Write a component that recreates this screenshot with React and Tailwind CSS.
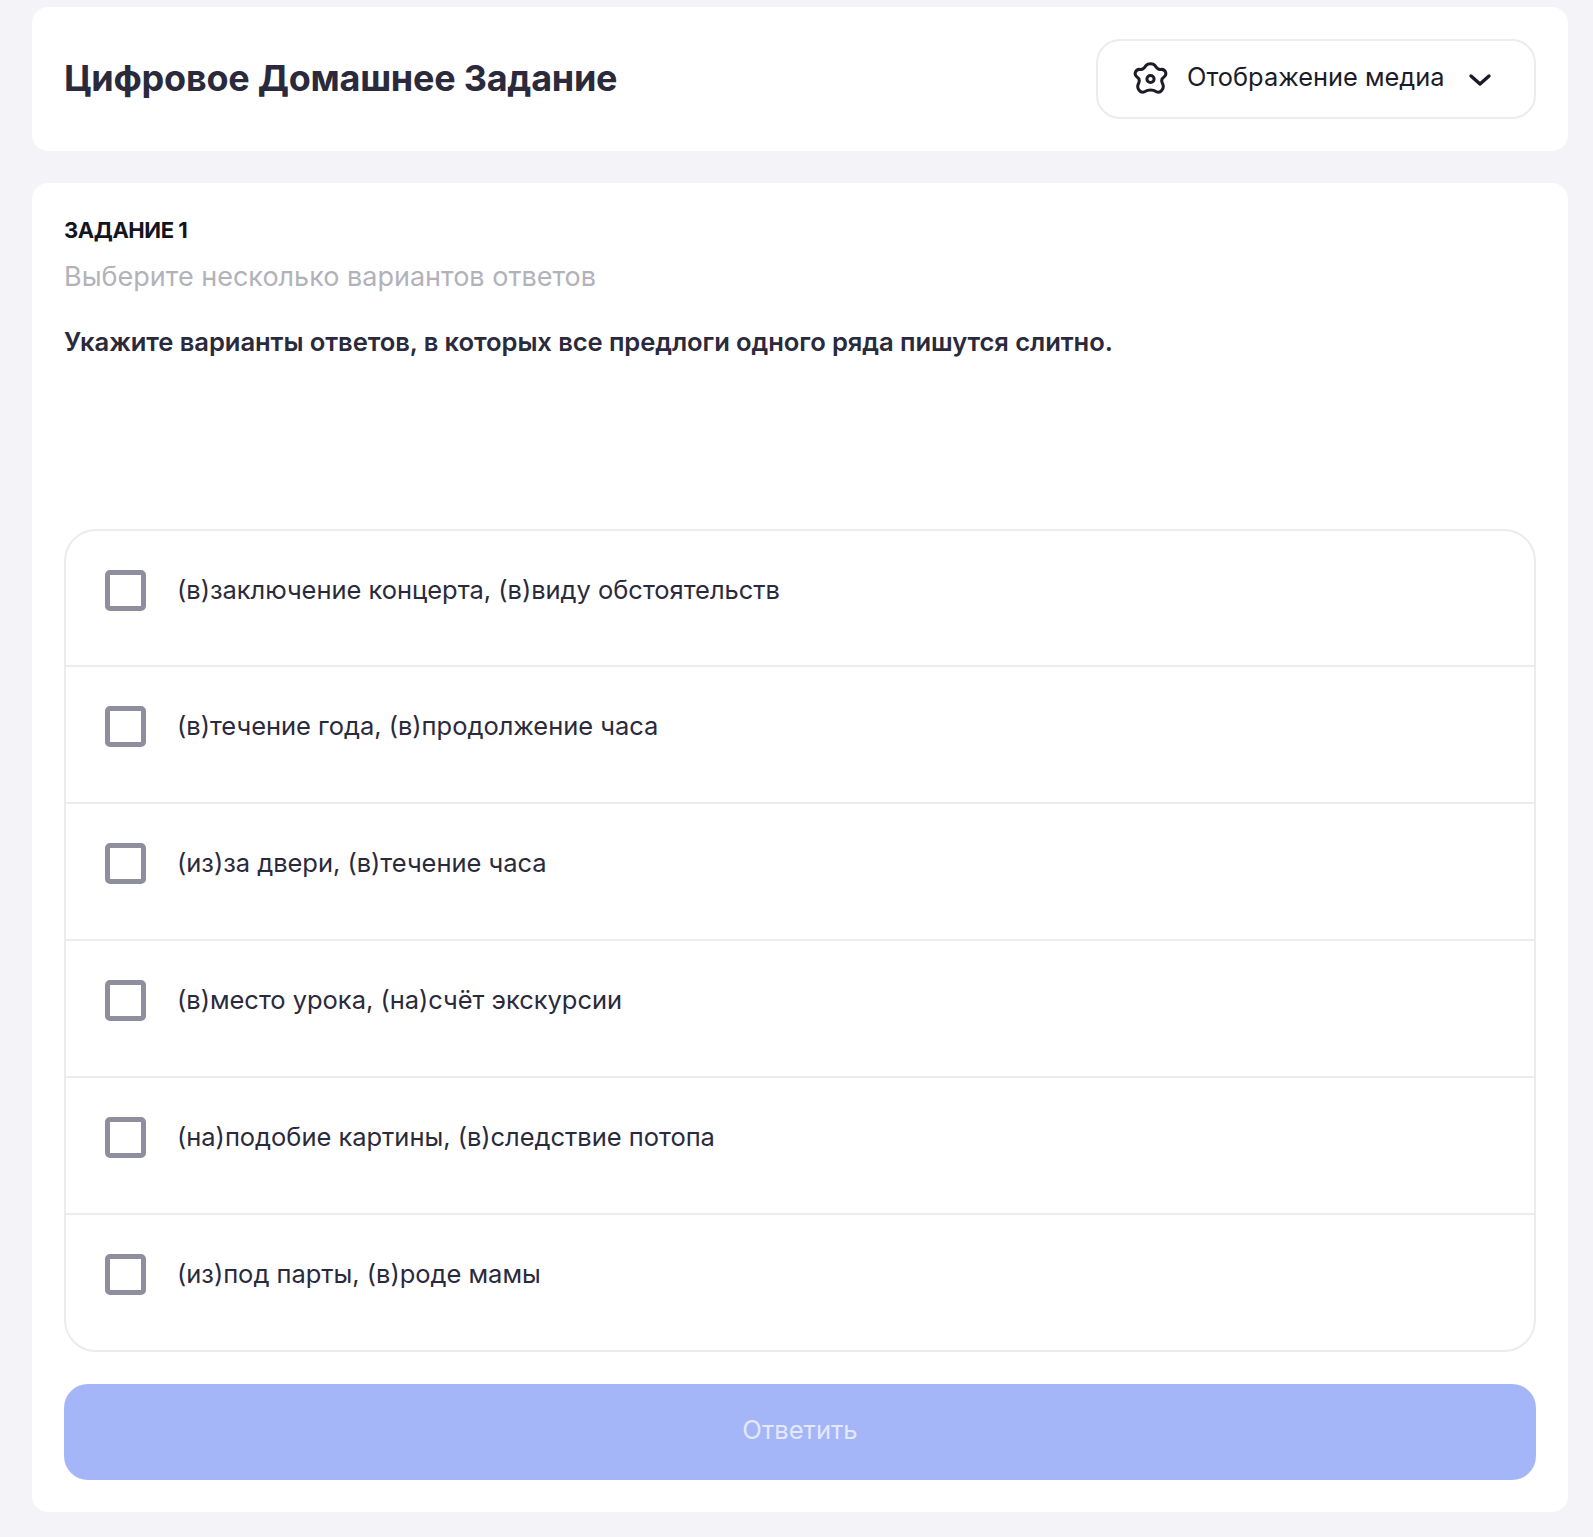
import React from 'react';

const options = [
  '(в)заключение концерта, (в)виду обстоятельств',
  '(в)течение года, (в)продолжение часа',
  '(из)за двери, (в)течение часа',
  '(в)место урока, (на)счёт экскурсии',
  '(на)подобие картины, (в)следствие потопа',
  '(из)под парты, (в)роде мамы',
];

const GearIcon = () => (
  <svg width="36" height="36" viewBox="-1 -1 36 36" fill="none" stroke="#1c1c28" strokeWidth="3" strokeLinejoin="round">
    <path d="M12 3.500 C14 1 19 1 21 3.500 C22.500 6 24 8 26.500 7.500 C31.500 6.500 33.500 12.500 30 15 C27.500 16.500 27 18.500 28.500 21.500 C31 26.500 26.500 32 22 29.500 C19 27.500 14 27.500 11 29.500 C6.500 32 2 26.500 4.500 21.500 C6 18.500 5.500 16.500 3 15 C-0.500 12.500 1.500 6.500 6.500 7.500 C9 8 10.500 6 12 3.500 Z" />
    <circle cx="16.500" cy="17" r="3.600" />
  </svg>
);

const Chevron = () => (
  <svg width="24" height="14" viewBox="0 0 24 14" fill="none" stroke="#1c1c28" strokeWidth="3.4" strokeLinecap="round" strokeLinejoin="round">
    <polyline points="3,3 12,11 21,3" />
  </svg>
);

export default function App() {
  return (
    <div className="min-h-[1537px] bg-[#f3f3f8] pl-8 pr-[25px] pt-[7px] font-['Inter',sans-serif]">
      <div className="flex h-[144px] items-center justify-between rounded-2xl bg-white px-8">
        <h1 className="-mt-[2px] text-[36px] font-bold tracking-[-0.25px] text-[#2a2a3c]">Цифровое Домашнее Задание</h1>
        <button className="flex h-[80px] w-[440px] items-center rounded-3xl border-2 border-[#ebebf0] pl-[35px] text-[#1c1c28]">
          <GearIcon />
          <span className="-mt-[3px] ml-[18px] text-[25.4px]">Отображение медиа</span>
          <span className="ml-[24px] mt-[2px]"><Chevron /></span>
        </button>
      </div>

      <div className="mt-8 rounded-2xl bg-white p-8">
        <div className="-mt-[1px] text-[22px] font-bold leading-[32px] tracking-[-0.45px] text-[#14141f]">ЗАДАНИЕ 1</div>
        <div className="mt-[15px] text-[27px] leading-[32px] text-[#b2b2ba]">Выберите несколько вариантов ответов</div>
        <p className="mt-[33px] text-[25.6px] font-semibold leading-[32px] tracking-[-0.09px] text-[#2a2a3c]">
          Укажите варианты ответов, в которых все предлоги одного ряда пишутся слитно.
        </p>

        <div className="mt-[171px] overflow-hidden rounded-[32px] border-2 border-[#ebebf0]">
          {options.map((text, i) => (
            <div
              key={i}
              className="flex h-[137px] items-start gap-8 border-t-2 border-[#ebebf0] pl-[39px] pt-[39px] first:h-[134px] first:border-t-0"
            >
              <div className="h-[41px] w-[41px] shrink-0 rounded-[5px] border-[5px] border-[#8e8e9e]" />
              <span className="-ml-[1px] -mt-[1px] text-[25.5px] leading-[41px] tracking-[-0.03px] text-[#2a2a3c]">{text}</span>
            </div>
          ))}
        </div>

        <button className="mt-8 flex h-[96px] w-full items-center justify-center rounded-3xl bg-[#a5b6f8] pb-[4px] text-[25.6px] text-[#e3e8fe]">
          Ответить
        </button>
      </div>
    </div>
  );
}
